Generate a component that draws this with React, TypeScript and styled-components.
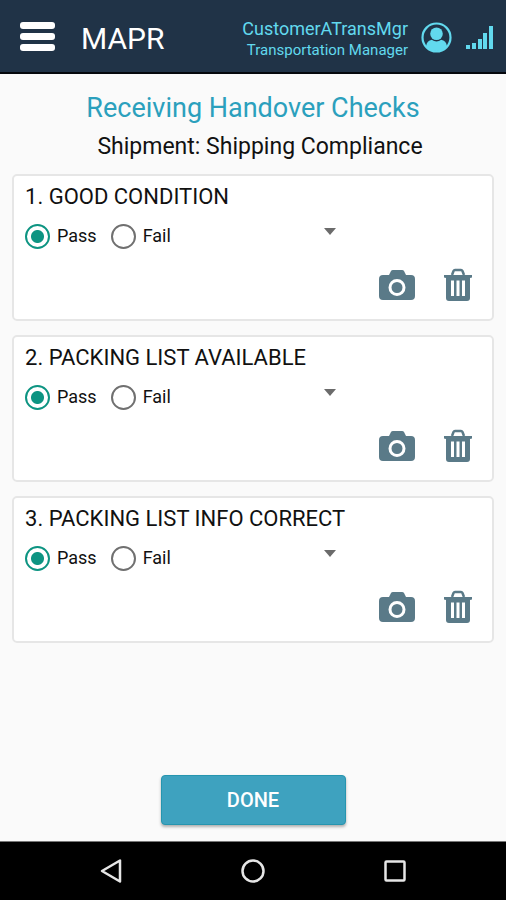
import React, { useState } from "react";
import styled, { createGlobalStyle } from "styled-components";

const GlobalStyle = createGlobalStyle`
  *, *::before, *::after { box-sizing: border-box; }
  body { margin: 0; background: #fafafa; font-family: Roboto, "Noto Sans", sans-serif; color: #111; }
  button, select, input { font: inherit; }
`;

const Screen = styled.div`
  min-height: 100vh;
  display: flex;
  flex-direction: column;
`;

const Header = styled.header`
  display: flex;
  align-items: center;
  height: 74px;
  padding: 2px 12px 0 20px;
  background: #203347;
  border-bottom: 2px solid #05080d;
`;

const IconButton = styled.button`
  display: flex;
  padding: 0;
  border: 0;
  background: none;
  color: inherit;
  cursor: pointer;
`;

const AppName = styled.h1`
  flex: 1;
  margin: 4px 0 0 26px;
  font-size: 30px;
  line-height: 36px;
  font-weight: 400;
  color: #fff;
`;

const Account = styled.div`
  display: flex;
  align-items: center;
  gap: 13px;
  color: #62d9ee;
`;

const UserText = styled.div`
  margin-top: 4px;
  text-align: right;
  white-space: nowrap;
`;

const UserName = styled.div`
  font-size: 18px;
  line-height: 22px;
`;

const UserRole = styled.div`
  font-size: 15px;
  line-height: 20px;
`;

const Main = styled.main`
  flex: 1;
  display: flex;
  flex-direction: column;
  padding: 16px 12px;
`;

const Title = styled.h2`
  margin: 0;
  text-align: center;
  font-size: 27px;
  line-height: 36px;
  font-weight: 400;
  color: #2ba0bd;
`;

const Subtitle = styled.p`
  margin: 6px 0 12px;
  padding-left: 14px;
  text-align: center;
  font-size: 23px;
  line-height: 30px;
`;

const CheckList = styled.div`
  display: flex;
  flex-direction: column;
  gap: 14px;
`;

const Card = styled.fieldset`
  min-width: 0;
  min-height: 147px;
  margin: 0;
  padding: 8px 19px 14px 11px;
  border: 2px solid #e6e6e6;
  border-radius: 5px;
  background: #fff;
`;

const CardTitle = styled.h3`
  margin: 0;
  font-size: 22px;
  line-height: 26px;
  font-weight: 400;
`;

const Controls = styled.div`
  display: flex;
  align-items: center;
  height: 52px;
  gap: 14px;
`;

const Choice = styled.label`
  display: flex;
  align-items: center;
  gap: 7px;
  font-size: 18px;
  line-height: 26px;
  cursor: pointer;
`;

const Radio = styled.input`
  appearance: none;
  width: 25px;
  height: 25px;
  margin: 0;
  border: 2px solid #707070;
  border-radius: 50%;
  background: #fff;
  cursor: pointer;

  &:checked {
    border-color: #0d9482;
    background: radial-gradient(circle, #0d9482 6px, #fff 7px);
  }
`;

const ReasonField = styled.div`
  position: relative;
  flex: 1;
  max-width: 151px;
  height: 36px;
`;

const ReasonSelect = styled.select`
  appearance: none;
  width: 100%;
  height: 36px;
  padding: 0 20px 0 0;
  border: 0;
  background: transparent;
  font-size: 16px;
  color: #111;
`;

const Caret = styled.svg`
  position: absolute;
  right: 0;
  top: 10px;
  pointer-events: none;
`;

const Actions = styled.div`
  display: flex;
  justify-content: flex-end;
  align-items: center;
  gap: 28px;
  margin-top: 6px;
  color: #5a7a88;
`;

const DoneButton = styled.button`
  align-self: center;
  width: 185px;
  height: 50px;
  margin-top: auto;
  border: 1px solid #2695af;
  border-radius: 4px;
  background: #3ea2bf;
  box-shadow: 0 2px 3px rgba(0, 0, 0, 0.3);
  color: #fff;
  font-size: 20px;
  font-weight: 500;
  cursor: pointer;
`;

const SystemBar = styled.nav`
  display: grid;
  grid-template-columns: repeat(3, 142px);
  justify-content: center;
  justify-items: center;
  align-items: center;
  height: 59px;
  border-top: 1px solid #777;
  background: #000;
  color: #e6e6e6;
`;

function MenuIcon() {
  return (
    <svg width="35" height="30" viewBox="0 0 35 30" fill="#fff" aria-hidden="true">
      <rect y="0" width="35" height="7" rx="3" />
      <rect y="11" width="35" height="7" rx="3" />
      <rect y="22" width="35" height="7" rx="3" />
    </svg>
  );
}

function UserIcon() {
  return (
    <svg width="31" height="31" viewBox="0 0 31 31" fill="none" aria-hidden="true">
      <circle cx="15.5" cy="15.5" r="14" stroke="currentColor" strokeWidth="2.2" />
      <circle cx="15.5" cy="11.8" r="6.3" fill="currentColor" />
      <path d="M5 24.5C5.5 20.5 7.5 18.5 11 17.8C13.5 20 17.5 20 20 17.8C23.5 18.5 25.5 20.5 26 24.5C20.5 30.5 10.5 30.5 5 24.5Z" fill="currentColor" />
    </svg>
  );
}

function SignalIcon() {
  return (
    <svg width="29" height="24" viewBox="0 0 29 24" fill="currentColor" aria-hidden="true">
      <rect x="1" y="20" width="4" height="4" />
      <rect x="7" y="18" width="4" height="6" />
      <rect x="13" y="14" width="4" height="10" />
      <rect x="18" y="8" width="4" height="16" />
      <rect x="24" y="1" width="4" height="23" />
    </svg>
  );
}

function CameraIcon() {
  return (
    <svg width="36" height="32" viewBox="0 0 36 32" aria-hidden="true">
      <path d="M4 6H10L12 2Q12.5 1 14 1H23Q24.5 1 25 2L27 6H32Q36 6 36 10V27Q36 31 32 31H4Q0 31 0 27V10Q0 6 4 6Z" fill="currentColor" />
      <circle cx="18" cy="18.5" r="7" fill="none" stroke="#fff" strokeWidth="3" />
    </svg>
  );
}

function TrashIcon() {
  return (
    <svg width="30" height="34" viewBox="0 0 30 34" fill="none" aria-hidden="true">
      <path d="M9 7L10.5 3Q11 2 12 2H18Q19 2 19.5 3L21 7" stroke="currentColor" strokeWidth="2.5" />
      <path d="M1 7H29V9.5L27 10V30Q27 33 24 33H6Q3 33 3 30V10L1 9.5Z" fill="currentColor" />
      <path d="M9.5 12.5V28M15 12.5V28M20.5 12.5V28" stroke="#fff" strokeWidth="3" />
    </svg>
  );
}

const checks = ["GOOD CONDITION", "PACKING LIST AVAILABLE", "PACKING LIST INFO CORRECT"];

function CheckCard({ number, name }: { number: number; name: string }) {
  const [result, setResult] = useState("Pass");
  return (
    <Card aria-label={name}>
      <CardTitle>{number}. {name}</CardTitle>
      <Controls>
        {["Pass", "Fail"].map((option) => (
          <Choice key={option}>
            <Radio
              type="radio"
              name={`check-${number}`}
              checked={result === option}
              onChange={() => setResult(option)}
            />
            {option}
          </Choice>
        ))}
        <ReasonField>
          <ReasonSelect aria-label={`${name} reason`}>
            <option value="" />
          </ReasonSelect>
          <Caret width="12" height="7" viewBox="0 0 12 7" aria-hidden="true">
            <path d="M0 0H12L6 7Z" fill="#6b6b6b" />
          </Caret>
        </ReasonField>
      </Controls>
      <Actions>
        <IconButton type="button" aria-label="Take photo"><CameraIcon /></IconButton>
        <IconButton type="button" aria-label="Delete"><TrashIcon /></IconButton>
      </Actions>
    </Card>
  );
}

export default function App() {
  return (
    <>
      <GlobalStyle />
      <Screen>
        <Header>
          <IconButton type="button" aria-label="Menu"><MenuIcon /></IconButton>
          <AppName>MAPR</AppName>
          <Account>
            <UserText>
              <UserName>CustomerATransMgr</UserName>
              <UserRole>Transportation Manager</UserRole>
            </UserText>
            <UserIcon />
            <SignalIcon />
          </Account>
        </Header>
        <Main>
          <Title>Receiving Handover Checks</Title>
          <Subtitle>Shipment: Shipping Compliance</Subtitle>
          <CheckList>
            {checks.map((name, index) => (
              <CheckCard key={name} number={index + 1} name={name} />
            ))}
          </CheckList>
          <DoneButton type="button">DONE</DoneButton>
        </Main>
        <SystemBar aria-label="System">
          <IconButton type="button" aria-label="Back">
            <svg width="24" height="26" viewBox="0 0 24 26" fill="none" stroke="currentColor" strokeWidth="2.5" strokeLinejoin="round" aria-hidden="true">
              <path d="M21 2.5V23.5L3 13Z" />
            </svg>
          </IconButton>
          <IconButton type="button" aria-label="Home">
            <svg width="26" height="26" viewBox="0 0 26 26" fill="none" stroke="currentColor" strokeWidth="2.5" aria-hidden="true">
              <circle cx="13" cy="13" r="10.5" />
            </svg>
          </IconButton>
          <IconButton type="button" aria-label="Recent apps">
            <svg width="24" height="24" viewBox="0 0 24 24" fill="none" stroke="currentColor" strokeWidth="2.5" aria-hidden="true">
              <rect x="2.5" y="2.5" width="19" height="19" rx="1" />
            </svg>
          </IconButton>
        </SystemBar>
      </Screen>
    </>
  );
}
